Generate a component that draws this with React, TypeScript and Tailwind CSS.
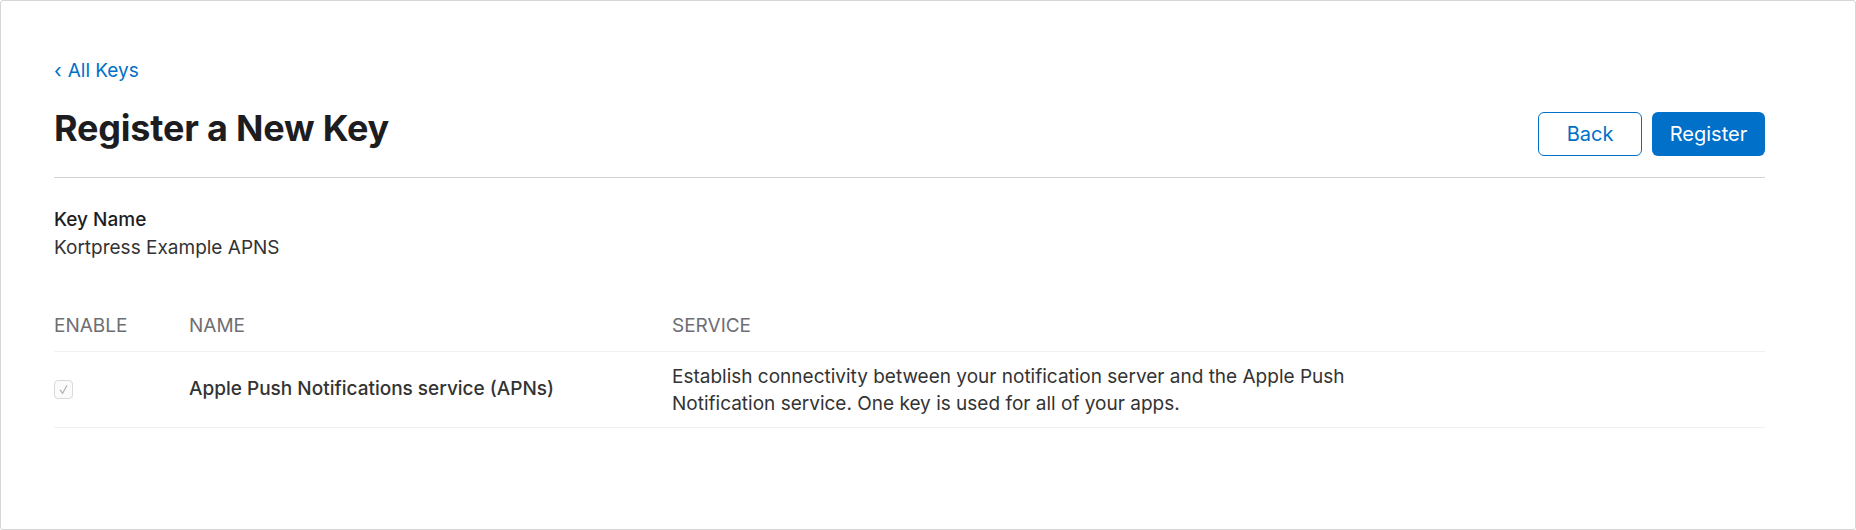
import React from "react";

export default function App() {
  return (
    <div className="w-[1856px] h-[530px] bg-white" style={{ fontFamily: "Inter, 'Noto Sans', sans-serif" }}>
      <div className="w-full h-full border border-[#d6d6d6] rounded-[3px] pl-[53px] pt-[57px]">
        <div className="w-[1711px]">
          <a className="flex items-center gap-[6px] text-[19px] leading-[26px] text-[#0070c9]">
            <span className="text-[20px] leading-none">‹</span>
            <span>All Keys</span>
          </a>
          <div className="flex items-start justify-between mt-[22px] pb-[21px] border-b border-[#d2d2d7]">
            <h1 className="text-[36px] leading-[44px] font-bold text-[#1d1d1f] tracking-[-0.2px]">Register a New Key</h1>
            <div className="flex gap-[10px] mt-[6px]">
              <button className="w-[104px] h-[44px] rounded-[6px] border border-[#0070c9] text-[#0070c9] text-[20px]">Back</button>
              <button className="w-[113px] h-[44px] rounded-[6px] bg-[#0070c9] text-white text-[20px]">Register</button>
            </div>
          </div>
          <div className="mt-[28px] text-[19px] leading-[28px]">
            <div className="font-medium text-[#1d1d1f]">Key Name</div>
            <div className="text-[#333333]">Kortpress Example APNS</div>
          </div>
          <div className="mt-[50px]">
            <div className="flex h-[40px] items-start border-b border-[#f0f0f0] text-[19px] leading-[28px] text-[#6e6e73]">
              <div className="w-[135px]">ENABLE</div>
              <div className="w-[483px]">NAME</div>
              <div>SERVICE</div>
            </div>
            <div className="flex items-center h-[76px] border-b border-[#f0f0f0] text-[19px]">
              <div className="w-[135px] flex items-center">
                <span className="w-[19px] h-[19px] rounded-[4px] border border-[#d9d9d9] bg-[#fbfbfb] flex items-center justify-center">
                  <svg width="13" height="13" viewBox="0 0 12 12" fill="none">
                    <path d="M3 6.5 L5.2 9.5 L9 2.5" stroke="#b0b0b0" strokeWidth="1.1" strokeLinecap="round" strokeLinejoin="round" />
                  </svg>
                </span>
              </div>
              <div className="w-[483px] font-medium text-[#333333]">Apple Push Notifications service (APNs)</div>
              <div className="w-[760px] leading-[27px] text-[#333333]">
                Establish connectivity between your notification server and the Apple Push<br />
                Notification service. One key is used for all of your apps.
              </div>
            </div>
          </div>
        </div>
      </div>
    </div>
  );
}
